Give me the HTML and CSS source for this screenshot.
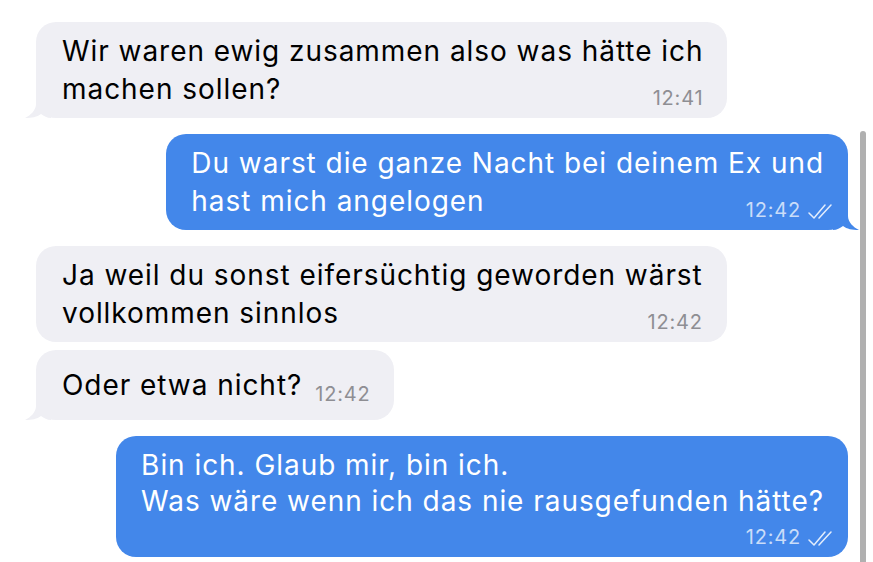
FILE: index.html
```html
<!DOCTYPE html>
<html lang="de">
<head>
<meta charset="utf-8">
<title>Chat</title>
<link rel="stylesheet" href="styles.css">
</head>
<body>
<div class="chat">
  <div class="msg in">
    <div class="bubble">
      <div class="line">Wir waren ewig zusammen also was hätte ich</div>
      <div class="last"><span>machen sollen?</span><span class="meta">12:41</span></div>
      <svg class="tail" width="26" height="24" viewBox="0 0 26 24"><path d="M11 0 L11 10 C11 16 6 21 0 24 C7 24 12 23 16 20 C19 22 22 24 26 24 L26 0 Z"/></svg>
    </div>
  </div>

  <div class="msg out">
    <div class="bubble">
      <div class="line">Du warst die ganze Nacht bei deinem Ex und</div>
      <div class="last"><span>hast mich angelogen</span><span class="meta">12:42 <svg class="ticks" width="24" height="15" viewBox="0 0 24 15"><path d="M1 9 L6 14 L17 1 M11 14 L23 1"/></svg></span></div>
      <svg class="tail" width="26" height="24" viewBox="0 0 26 24"><path d="M15 0 L15 10 C15 16 20 21 26 24 C19 24 14 23 10 20 C7 22 4 24 0 24 L0 0 Z"/></svg>
    </div>
  </div>

  <div class="msg in">
    <div class="bubble">
      <div class="line">Ja weil du sonst eifersüchtig geworden wärst</div>
      <div class="last"><span>vollkommen sinnlos</span><span class="meta">12:42</span></div>
    </div>
  </div>

  <div class="msg in grouped">
    <div class="bubble single">
      <div class="last"><span>Oder etwa nicht?</span><span class="meta">12:42</span></div>
      <svg class="tail" width="26" height="24" viewBox="0 0 26 24"><path d="M11 0 L11 10 C11 16 6 21 0 24 C7 24 12 23 16 20 C19 22 22 24 26 24 L26 0 Z"/></svg>
    </div>
  </div>

  <div class="msg out">
    <div class="bubble tall">
      <div class="line">Bin ich. Glaub mir, bin ich.</div>
      <div class="line">Was wäre wenn ich das nie rausgefunden hätte?</div>
      <div class="metarow"><span class="meta">12:42 <svg class="ticks" width="24" height="15" viewBox="0 0 24 15"><path d="M1 9 L6 14 L17 1 M11 14 L23 1"/></svg></span></div>
    </div>
  </div>
</div>
<div class="scrollbar"></div>
</body>
</html>
```

FILE: styles.css
```css
html, body {
  margin: 0;
  padding: 0;
  background: #ffffff;
}
body {
  width: 873px;
  height: 562px;
  overflow: hidden;
  position: relative;
  font-family: "Inter", "Noto Sans", sans-serif;
  -webkit-font-smoothing: antialiased;
}
.chat {
  display: flex;
  flex-direction: column;
  gap: 16px;
  padding: 22px 25px 0 36px;
}
.msg {
  display: flex;
}
.msg.in { justify-content: flex-start; }
.msg.out { justify-content: flex-end; }
.msg.grouped { margin-top: -8px; }

.bubble {
  position: relative;
  border-radius: 20px;
  padding: 10px 24px 10px 26px;
  font-size: 28px;
  line-height: 38px;
  letter-spacing: 0.95px;
  white-space: nowrap;
}
.in .bubble {
  background: #efeff4;
  color: #000;
}
.out .bubble {
  background: #4387ea;
  color: #fff;
  padding-left: 25px;
}
.in .bubble .tail { left: -11px; fill: #efeff4; }
.out .bubble .tail { right: -11px; fill: #4387ea; }
.tail {
  position: absolute;
  bottom: 0;
}
.last {
  display: flex;
  align-items: baseline;
  justify-content: space-between;
  gap: 13px;
}
.meta {
  font-size: 20px;
  line-height: 22px;
  letter-spacing: 0.8px;
  color: #8e8e93;
  position: relative;
  top: 6px;
  display: inline-flex;
  align-items: center;
  gap: 7px;
}
.out .meta {
  color: rgba(255, 255, 255, 0.72);
  margin-right: -8px;
}
.ticks {
  fill: none;
  stroke: rgba(255, 255, 255, 0.85);
  stroke-width: 1.5;
  stroke-linecap: round;
  stroke-linejoin: round;
  position: relative;
  top: 1px;
}
.bubble.single {
  padding-top: 16px;
  padding-bottom: 16px;
}
.bubble.tall {
  padding-top: 11px;
  padding-bottom: 10px;
  line-height: 36px;
}
.metarow {
  display: flex;
  justify-content: flex-end;
  height: 28px;
}
.metarow .meta { top: 4px; }
.scrollbar {
  position: absolute;
  left: 860px;
  top: 131px;
  width: 6px;
  bottom: 0;
  border-radius: 3px 3px 0 0;
  background: #b0b0b0;
}
```
